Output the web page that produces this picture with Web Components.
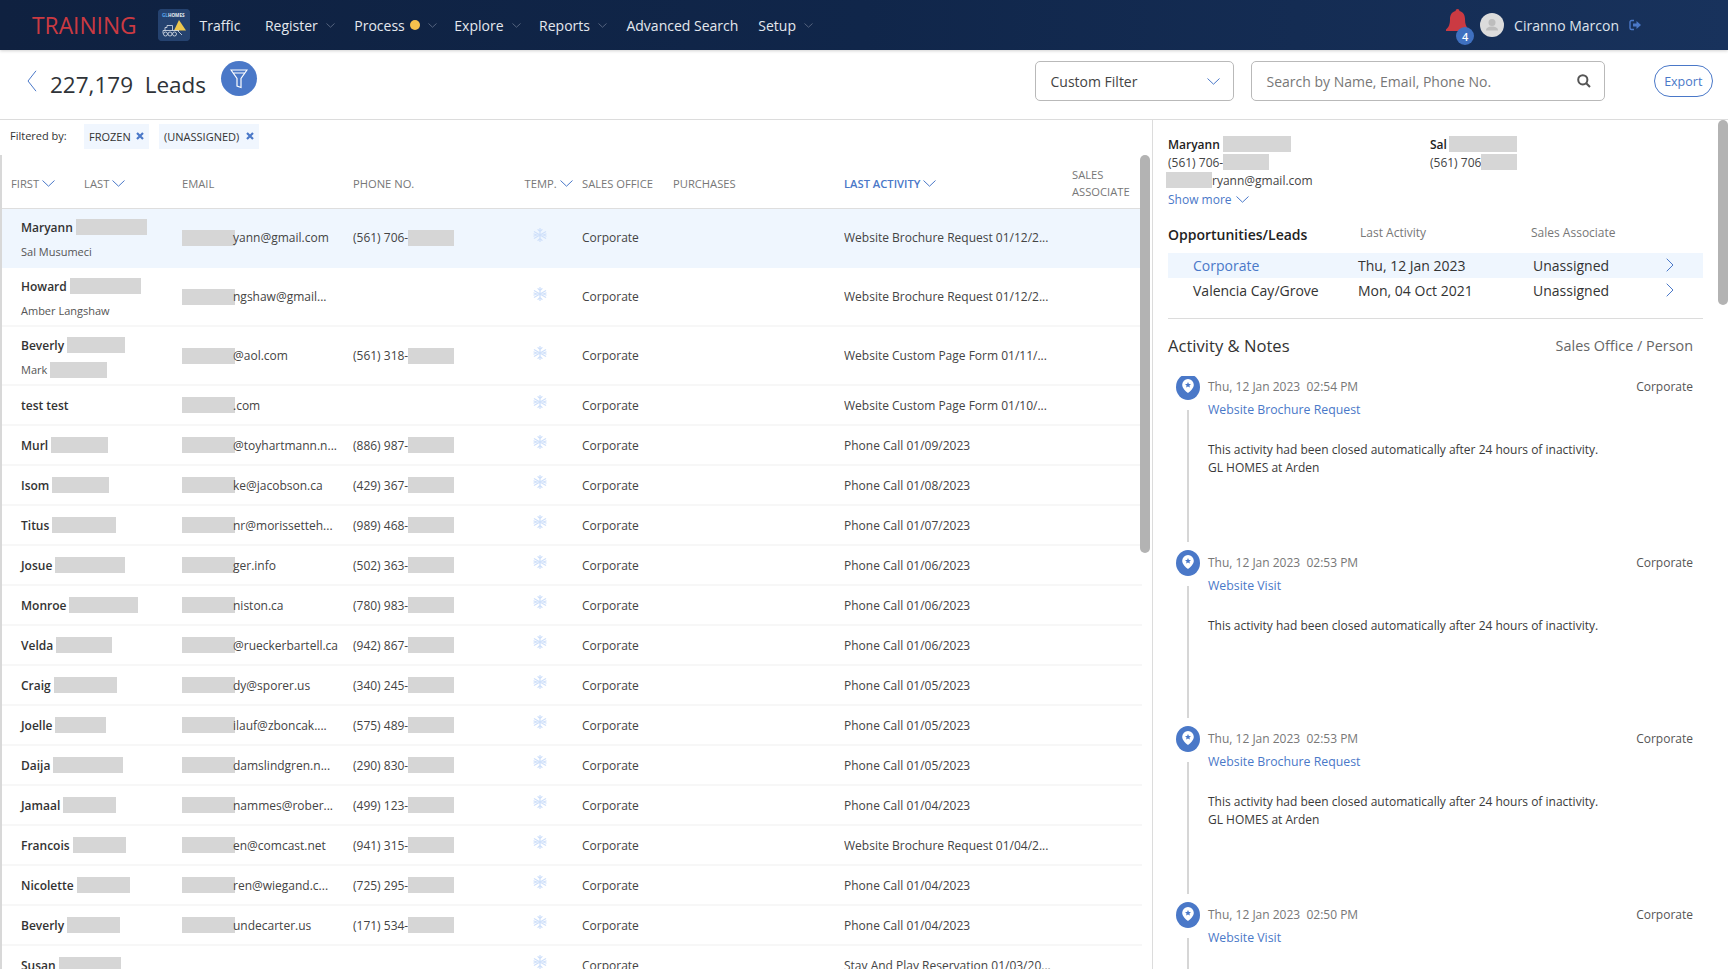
<!DOCTYPE html>
<html lang="en"><head><meta charset="utf-8"><title>Leads</title>
<style>
html,body{margin:0;height:969px;overflow:hidden;background:#fff;font-family:"Open Sans",sans-serif;color:#444}
</style></head><body>
<crm-app></crm-app>
<script>
const BLUE='#4a78c8';
const chev=(w=13,h=7,c=BLUE,sw=1)=>`<svg width="${w}" height="${h}" viewBox="0 0 ${w} ${h}" style="display:block;flex:none"><path d="M.5 .5L${w/2} ${h-.8}L${w-.5} .5" fill="none" stroke="${c}" stroke-width="${sw}"/></svg>`;
const chevR=(c=BLUE)=>`<svg width="8" height="14" viewBox="0 0 8 14" style="display:block"><path d="M.7 .7L7 7L.7 13.3" fill="none" stroke="${c}" stroke-width="1"/></svg>`;
const snow=`<svg width="14" height="14" viewBox="0 0 14 14" style="display:block" fill="none" stroke="#cfe0fa" stroke-width="1.3" stroke-linecap="round"><path d="M7 .5v13M1.4 3.75l11.2 6.5M12.6 3.75L1.4 10.25M5 1.6l2 2 2-2M5 12.4l2-2 2 2M1 6l2.7 1-2.7 1M13 6l-2.7 1 2.7 1"/></svg>`;
function def(name,css,render){
  customElements.define(name,class extends HTMLElement{
    connectedCallback(){ if(this.shadowRoot) return;
      const s=this.attachShadow({mode:'open'});
      s.innerHTML=`<style>${css}</style>`+render(this);
    }
  });
}
const a=(el,n,d='')=>el.getAttribute(n)??d;

def('redact-box',`:host{display:inline-block;background:#d6d6d6;height:16px;flex:none;vertical-align:middle}`,el=>{el.style.width=a(el,'w','40')+'px';return ''});

def('nav-item',`:host{display:flex;align-items:center;font-size:14px;color:#e4e8ee;white-space:nowrap;height:50px}
 .d{width:10px;height:10px;border-radius:50%;background:#f5c24d;margin-left:5px}
 .c{margin-left:8px}`,el=>`<slot></slot>${el.hasAttribute('dot')?'<span class="d"></span>':''}${el.hasAttribute('menu')?`<span class="c">${chev(9,5,'#55647f',1)}</span>`:''}`);

def('app-header',`:host{display:flex;align-items:center;height:50px;background:linear-gradient(90deg,#0f2140,#10264a 50%,#18325c);box-shadow:0 1px 3px rgba(0,0,0,.18);position:relative;z-index:2;color:#fff;flex:none}
 .t{font-size:22.8px;font-weight:500;color:#cb3a42;margin-left:32px;width:125.5px;white-space:nowrap}
 .logo{width:32px;height:32px;border-radius:4px;background:#25426f;display:block;flex:none}
 .logo text{font:700 4.6px "Open Sans",sans-serif;}
 nav-item{flex:none}
 .r{margin-left:auto;display:flex;align-items:center;height:50px}
 .bell{position:relative;width:23px;height:50px;margin-right:11.5px}
 .bell svg{position:absolute;left:1px;top:9px}
 .bdg{position:absolute;left:11px;top:27px;width:18px;height:18px;border-radius:50%;background:#3f70c0;color:#fff;font-size:11px;font-weight:600;display:flex;align-items:center;justify-content:center}
 .av{margin-right:10.5px;display:block}
 .n{font-size:14px;color:#dfe4ec;white-space:nowrap;margin-right:10px}
 .o{display:block;margin-right:87px}
`,()=>`<div class="t">TRAINING</div>
 <svg class="logo" viewBox="0 0 32 32"><rect width="32" height="32" rx="4" fill="#25426f"/><text x="4" y="8"><tspan fill="#5aa5e8">GL</tspan><tspan fill="#e8ecf2">HOMES</tspan></text>
 <path d="M21 11l7 10.5H16z" fill="#eec84e"/><g fill="none" stroke="#dfe5ee" stroke-width=".8"><path d="M9 16.5h5.5v5M7 21.5v-3h2v-2M5 24.5v-3h16"/><circle cx="7.5" cy="25" r="2"/><circle cx="12" cy="25" r="2"/><circle cx="16.5" cy="25" r="2"/><path d="M20 22l4 4"/></g></svg>
 <nav-item style="margin-left:10px">Traffic</nav-item>
 <nav-item menu style="margin-left:24.5px">Register</nav-item>
 <nav-item menu dot style="margin-left:19.5px">Process</nav-item>
 <nav-item menu style="margin-left:17.6px">Explore</nav-item>
 <nav-item menu style="margin-left:18.5px">Reports</nav-item>
 <nav-item style="margin-left:19.5px;padding-top:1px">Advanced Search</nav-item>
 <nav-item menu style="margin-left:20px">Setup</nav-item>
 <div class="r">
  <div class="bell"><svg width="23" height="24" viewBox="0 0 23 24"><path d="M11.5 0a2 2 0 0 1 2 2c4 1 5.500 4.500 5.500 8 0 5 1 8 4 10.500V22H0v-1.500C3 18 4 15 4 10c0-3.500 1.500-7 5.500-8a2 2 0 0 1 2-2z" fill="#cb3a42"/></svg><span class="bdg">4</span></div>
  <svg class="av" width="24" height="24" viewBox="0 0 24 24"><circle cx="12" cy="12" r="12" fill="#dcdcdc"/><circle cx="12" cy="9.500" r="3.500" fill="#bdbdbd"/><path d="M6 17.500c0-3 3-4 6-4s6 1 6 4z" fill="#bdbdbd"/></svg>
  <div class="n">Ciranno Marcon</div>
  <svg class="o" width="12" height="12" viewBox="0 0 12 12"><path d="M5 1.500H2.500a1.500 1.500 0 0 0-1.500 1.500v6a1.500 1.500 0 0 0 1.500 1.500H5" fill="none" stroke="${BLUE}" stroke-width="1.400"/><path d="M4 4.500h3.500V2L12 6l-4.500 4V7.500H4z" fill="${BLUE}"/></svg>
 </div>`);

def('leads-toolbar',`:host{display:flex;height:69px;border-bottom:1px solid #dcdcdc;position:relative;flex:none;box-sizing:content-box}
 .back{margin:20px 0 0 27px;display:block}
 h1{margin:20px 0 0 13px;font-size:22.5px;font-weight:500;color:#2f3338;line-height:30px;white-space:pre;height:30px}
 .f{width:36px;height:35px;margin:11px 0 0 14.5px;border-radius:50%;background:${BLUE};display:flex;align-items:center;justify-content:center}
 .sel,.srch{box-sizing:border-box;height:40px;margin-top:11px;border:1.5px solid #b9b9b9;border-radius:5px;display:flex;align-items:center;font-size:14px;flex:none}
 .sel{width:199.500px;margin-left:auto;padding:0 13px 0 15px;justify-content:space-between;color:#444}
 .srch{width:354px;margin-left:16.500px;padding:0 13px 0 15px;justify-content:space-between;color:#777}
 .ex{box-sizing:border-box;margin:15px 15.5px 0 49.5px;width:58.500px;height:32px;border:1.2px solid ${BLUE};border-radius:16px;color:${BLUE};font-size:12.5px;display:flex;align-items:center;justify-content:center;flex:none}
`,()=>`<svg class="back" width="10" height="22" viewBox="0 0 10 22"><path d="M9 .8L1 11l8 10.200" fill="none" stroke="${BLUE}" stroke-width="1"/></svg>
 <h1>227,179  Leads</h1>
 <div class="f"><svg width="18" height="20" viewBox="0 0 18 20" fill="none" stroke="#fff" stroke-width="1.200"><path d="M1 1h16L11 9.500v9l-4-1.500V9.500zM3.500 4h11"/></svg></div>
 <div class="sel"><span>Custom Filter</span>${chev(13,7,BLUE,1)}</div>
 <div class="srch"><span>Search by Name, Email, Phone No.</span><svg width="14" height="14" viewBox="0 0 14 14" fill="none" stroke="#555" stroke-width="2"><circle cx="5.800" cy="5.800" r="4.600"/><path d="M9.200 9.200L13 13"/></svg></div>
 <div class="ex">Export</div>`);

def('filter-chip',`:host{display:flex;align-items:center;justify-content:space-between;height:25px;background:#f0f6fe;padding:0 5px;box-sizing:border-box;font-size:11px;color:#333;white-space:nowrap}`,
 ()=>`<slot></slot><svg width="8" height="8" viewBox="0 0 8 8"><path d="M1 1l6 6M7 1L1 7" stroke="${BLUE}" stroke-width="2.200"/></svg>`);

const COLS='180px 171px 171.5px 57.5px 91px 171px 228px 70px';
def('lead-row',`:host{display:grid;grid-template-columns:${COLS};box-sizing:border-box;border-bottom:2px solid #f7f7f7;font-size:12px;color:#444;white-space:nowrap}
 :host([sel]){background:#eff6fe;border-bottom-color:#eff6fe}
 .c{display:flex;align-items:center;min-width:0;overflow:hidden}
 .nm{padding-left:19px;flex-direction:column;align-items:flex-start;justify-content:center}
 .two{justify-content:flex-start;padding-top:10px}
 .l{display:flex;align-items:center;height:16px;gap:var(--g,3px)}
 .m{font-weight:600;color:#333}
 .s{font-size:11px;margin-top:8.5px;color:#555}
 .ml{margin-left:-2px}
 .tmp{padding-left:8.500px;transform:translateY(-3px)}
`,el=>{const d=JSON.parse(a(el,'data'));const two=d.sub!==undefined;
 el.style.height=(two?59:40)+'px';
 return `<div class="c nm ${two?'two':''}"><div class="l m"><span>${d.n}</span>${d.b?`<redact-box w="${d.b}"></redact-box>`:''}</div>
  ${two?`<div class="l s"><span>${d.sub}</span>${d.sb?`<redact-box w="${d.sb}"></redact-box>`:''}</div>`:''}</div>
  <div class="c">${d.e?`<redact-box w="53"></redact-box><span class="ml">${d.e}</span>`:''}</div>
  <div class="c">${d.p?`<span>${d.p}</span><redact-box w="46"></redact-box>`:''}</div>
  <div class="c tmp">${snow}</div>
  <div class="c">Corporate</div><div class="c"></div>
  <div class="c">${d.a}</div><div class="c"></div>`});

const ROWS=[
{n:'Maryann',b:71,sub:'Sal Musumeci',e:'yann@gmail.com',p:'(561) 706-',a:'Website Brochure Request 01/12/2...'},
{n:'Howard',b:71,sub:'Amber Langshaw',e:'ngshaw@gmail...',p:'',a:'Website Brochure Request 01/12/2...'},
{n:'Beverly',b:58,sub:'Mark',sb:57,e:'@aol.com',p:'(561) 318-',a:'Website Custom Page Form 01/11/...'},
{n:'test test',e:'.com',p:'',a:'Website Custom Page Form 01/10/...'},
{n:'Murl',b:57,e:'@toyhartmann.n...',p:'(886) 987-',a:'Phone Call 01/09/2023'},
{n:'Isom',b:57,e:'ke@jacobson.ca',p:'(429) 367-',a:'Phone Call 01/08/2023'},
{n:'Titus',b:64,e:'nr@morissetteh...',p:'(989) 468-',a:'Phone Call 01/07/2023'},
{n:'Josue',b:70,e:'ger.info',p:'(502) 363-',a:'Phone Call 01/06/2023'},
{n:'Monroe',b:69,e:'niston.ca',p:'(780) 983-',a:'Phone Call 01/06/2023'},
{n:'Velda',b:56,e:'@rueckerbartell.ca',p:'(942) 867-',a:'Phone Call 01/06/2023'},
{n:'Craig',b:63,e:'dy@sporer.us',p:'(340) 245-',a:'Phone Call 01/05/2023'},
{n:'Joelle',b:51,e:'ilauf@zboncak....',p:'(575) 489-',a:'Phone Call 01/05/2023'},
{n:'Daija',b:70,e:'damslindgren.n...',p:'(290) 830-',a:'Phone Call 01/05/2023'},
{n:'Jamaal',b:53,e:'nammes@rober...',p:'(499) 123-',a:'Phone Call 01/04/2023'},
{n:'Francois',b:53,e:'en@comcast.net',p:'(941) 315-',a:'Website Brochure Request 01/04/2...'},
{n:'Nicolette',b:53,e:'ren@wiegand.c...',p:'(725) 295-',a:'Phone Call 01/04/2023'},
{n:'Beverly',b:53,e:'undecarter.us',p:'(171) 534-',a:'Phone Call 01/04/2023'},
{n:'Susan',b:62,e:'',p:'',a:'Stay And Play Reservation 01/03/20...'},
];
def('leads-table',`:host{display:block;position:relative;height:814px;overflow:hidden;border-left:2px solid #d8d8d8;box-sizing:border-box;width:1150px;}
 .h{display:grid;grid-template-columns:${COLS};height:49px;padding-top:4px;border-bottom:1px solid #dedede;font-size:11.2px;color:#777;width:1140px;align-items:center;box-sizing:content-box;white-space:nowrap}
 .i{display:flex;align-items:center;gap:3px}
 .a{color:${BLUE};font-weight:600}
 .sa{line-height:16.500px;white-space:normal}
 .rows{width:1140px}
 .bar{position:absolute;right:0;top:0;width:10px;height:398px;background:#b3b3b3;border-radius:5px}
`,()=>`<div class="h"><div class="i" style="padding-left:9px"><span>FIRST</span>${chev(13,7)}<span style="margin-left:26px">LAST</span>${chev(13,7)}</div>
 <div>EMAIL</div><div>PHONE NO.</div><div class="i"><span>TEMP.</span>${chev(13,7)}</div><div>SALES OFFICE</div><div>PURCHASES</div>
 <div class="i a"><span>LAST ACTIVITY</span>${chev(13,7)}</div><div class="sa">SALES ASSOCIATE</div></div>
 <div class="rows">${ROWS.map((r,i)=>`<lead-row ${i==0?'sel':''} data='${JSON.stringify(r)}'></lead-row>`).join('')}</div>
 <div class="bar"></div>`);

def('filter-bar',`:host{display:flex;align-items:center;height:35px;padding:0 0 3px 10px;font-size:11px;color:#333;flex:none;box-sizing:border-box}
 span{width:74px;margin-bottom:1px}
 filter-chip+filter-chip{margin-left:10px}`,()=>`<span>Filtered by:</span><filter-chip style="width:65px">FROZEN</filter-chip><filter-chip style="width:100px">(UNASSIGNED)</filter-chip>`);

def('left-pane',`:host{display:flex;flex-direction:column;width:1152px;border-right:1px solid #dcdcdc;flex:none}`,()=>`<filter-bar></filter-bar><leads-table></leads-table>`);

def('activity-item',`:host{display:grid;grid-template-columns:24px 1fr;column-gap:8px;height:176px;position:relative;font-size:12px;box-sizing:border-box}
 .ic{position:relative}
 .ic svg{display:block}
 .ln{position:absolute;left:11px;top:36px;bottom:8px;width:2px;background:#d6d6d6}
 .top{display:flex;justify-content:space-between;height:22px;align-items:center;color:#777;padding-top:1px}
 .top b{font-weight:400;color:#555}
 .lk{color:${BLUE};margin-top:1.5px;height:22px;line-height:22px;font-size:12.3px}
 .bd{margin-top:20.5px;color:#3a3a3a;line-height:17.6px;white-space:pre-line}
`,el=>`<div class="ic"><svg width="24" height="26" viewBox="0 0 24 26"><ellipse cx="12" cy="13" rx="12" ry="13" fill="${BLUE}"/><path d="M12 5a5.800 5.800 0 0 1 5.800 5.800c0 3.400-3.300 6.400-5.800 8.200-2.500-1.800-5.800-4.800-5.800-8.200A5.800 5.800 0 0 1 12 5z" fill="#fff"/><path d="M12 8l.9 1.900 2.100.2-1.600 1.400.5 2.100-1.900-1.100-1.900 1.100.5-2.100L9 10.100l2.100-.2z" fill="${BLUE}"/></svg><div class="ln"></div></div>
 <div><div class="top"><span>${a(el,'when')}</span><b>Corporate</b></div><div class="lk">${a(el,'link')}</div><div class="bd"><slot></slot></div></div>`);

def('opp-row',`:host{display:grid;grid-template-columns:190px 175px 132px 1fr;height:25px;align-items:center;font-size:14px;color:#333;white-space:nowrap;box-sizing:border-box}
 :host([sel]){background:#eff6fe}
 .n{padding-left:25px}
 :host([sel]) .n{color:${BLUE}}
 .c{transform:translate(1px,-1px)}`,el=>`<div class="n">${a(el,'name')}</div><div>${a(el,'date')}</div><div>Unassigned</div><div class="c">${chevR()}</div>`);

def('right-pane',`:host{display:block;flex:1;position:relative;height:849px;overflow:hidden;color:#444;font-size:12px}
 .in{margin-left:15px;width:535px}
 .cts{display:grid;grid-template-columns:262px 1fr;padding-top:15px;height:80px;box-sizing:content-box}
 .l{display:flex;align-items:center;height:18px;white-space:nowrap}
 .nm{font-weight:600;color:#222;height:18px}
 .sm{color:${BLUE};display:flex;align-items:center;gap:4px;margin-top:1px;height:18px}
 .oh{display:grid;grid-template-columns:192px 171px 1fr;margin-top:10px;height:28px;align-items:start}
 .oh h3{margin:0;font-size:14px;font-weight:600;color:#222;line-height:20px}
 .oh span{font-size:12px;color:#777;line-height:20px;margin-top:-2px}
 .opp{height:50px}
 hr{border:0;border-top:1px solid #dcdcdc;margin:15px 0 0}
 .ah{display:flex;justify-content:space-between;align-items:center;margin-top:15px;height:22px;width:525px}
 .ah h3{margin:0;font-size:16.6px;font-weight:500;color:#333}
 .ah span{font-size:14.4px;font-weight:500;color:#666}
 .acts{margin-top:20px;height:600px;overflow:hidden;width:525px;padding-left:8px;box-sizing:border-box}
 .acts>div{margin-top:-2px}
 .bar{position:absolute;right:0;top:0;width:10px;height:185px;background:#b3b3b3;border-radius:5px}
`,()=>`<div class="in">
 <div class="cts"><div>
   <div class="l nm"><span>Maryann</span><redact-box w="68.500" style="margin-left:3px"></redact-box></div>
   <div class="l"><span>(561) 706-</span><redact-box w="46"></redact-box></div>
   <div class="l" style="margin-left:-2px"><redact-box w="46"></redact-box><span>ryann@gmail.com</span></div>
   <div class="sm"><span>Show more</span>${chev(13,7)}</div>
  </div><div>
   <div class="l nm"><span>Sal</span><redact-box w="68.500" style="margin-left:2px"></redact-box></div>
   <div class="l"><span>(561) 706</span><redact-box w="35.500"></redact-box></div>
  </div></div>
 <div class="oh"><h3>Opportunities/Leads</h3><span>Last Activity</span><span>Sales Associate</span></div>
 <div class="opp"><opp-row sel name="Corporate" date="Thu, 12 Jan 2023"></opp-row><opp-row name="Valencia Cay/Grove" date="Mon, 04 Oct 2021"></opp-row></div>
 <hr>
 <div class="ah"><h3>Activity &amp; Notes</h3><span>Sales Office / Person</span></div>
 <div class="acts"><div>
  <activity-item when="Thu, 12 Jan 2023&nbsp;&nbsp;02:54 PM" link="Website Brochure Request">This activity had been closed automatically after 24 hours of inactivity.
GL HOMES at Arden</activity-item>
  <activity-item when="Thu, 12 Jan 2023&nbsp;&nbsp;02:53 PM" link="Website Visit">This activity had been closed automatically after 24 hours of inactivity.</activity-item>
  <activity-item when="Thu, 12 Jan 2023&nbsp;&nbsp;02:53 PM" link="Website Brochure Request">This activity had been closed automatically after 24 hours of inactivity.
GL HOMES at Arden</activity-item>
  <activity-item when="Thu, 12 Jan 2023&nbsp;&nbsp;02:50 PM" link="Website Visit">This activity had been closed automatically after 24 hours of inactivity.</activity-item>
 </div></div>
 </div><div class="bar"></div>`);

def('crm-app',`:host{display:flex;flex-direction:column;height:969px;overflow:hidden}
 .m{display:flex;flex:1;min-height:0}`,()=>`<app-header></app-header><leads-toolbar></leads-toolbar><div class="m"><left-pane></left-pane><right-pane></right-pane></div>`);
</script>
</body></html>
